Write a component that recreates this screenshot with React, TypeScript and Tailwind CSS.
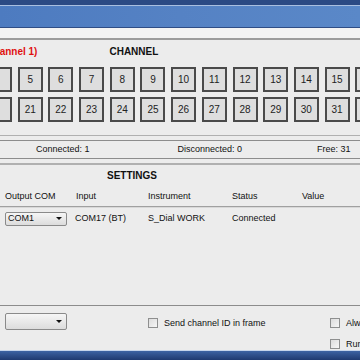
import React from "react";

const row1 = ["4", "5", "6", "7", "8", "9", "10", "11", "12", "13", "14", "15", "16"];
const row2 = ["20", "21", "22", "23", "24", "25", "26", "27", "28", "29", "30", "31", "32"];

function ChannelButton({ label }: { label: string }) {
  return (
    <div className="w-[25px] h-[25px] shrink-0 border-2 border-[#4a4a4a] bg-[#dedede] flex items-center justify-center text-[10px] text-[#222]">
      {label}
    </div>
  );
}

function Combo({ value, h }: { value: string; h: string }) {
  return (
    <div className={`w-[62px] ${h} border border-[#8a8a8a] rounded-[2px] bg-gradient-to-b from-[#f6f6f6] to-[#dcdcdc] flex items-center justify-between pl-[2px] pr-[4px] text-[9px] text-[#111]`}>
      <span>{value}</span>
      <span className="w-0 h-0 border-l-[3px] border-r-[3px] border-t-[3px] border-l-transparent border-r-transparent border-t-[#111]" />
    </div>
  );
}

function Check({ label }: { label: string }) {
  return (
    <div className="h-[10px] flex items-center gap-[6px] text-[9px] leading-none text-[#111] whitespace-nowrap">
      <div className="w-[10px] h-[10px] shrink-0 border border-[#8e8f8f] bg-gradient-to-br from-[#dcdcdc] to-[#f6f6f6]" />
      <span>{label}</span>
    </div>
  );
}

export default function App() {
  return (
    <div
      className="w-[360px] h-[360px] overflow-hidden bg-[#ececec] flex flex-col"
      style={{ fontFamily: '"Liberation Sans", Arial, sans-serif' }}
    >
      {/* title bar */}
      <div className="h-[5px] bg-[#2b4a84] shrink-0" />
      <div className="h-px bg-[#a9bfe0] shrink-0" />
      <div className="h-[21px] bg-gradient-to-r from-[#4d7bc0] via-[#5582c4] to-[#5a88c8] shrink-0" />
      <div className="h-px bg-[#2f4d85] shrink-0" />
      <div className="h-[10px] bg-[#f3f3f3] shrink-0" />
      <div className="h-[2px] bg-[#9c9c9c] shrink-0" />

      {/* channel title */}
      <div className="h-[23px] flex items-center shrink-0">
        <span className="ml-[-17px] shrink-0 text-[10px] font-bold text-[#e01010] whitespace-nowrap">(Channel 1)</span>
        <span className="ml-[72px] shrink-0 text-[10px] font-bold text-[#111]">CHANNEL</span>
      </div>

      {/* channel buttons */}
      <div className="mt-[4px] flex flex-col gap-[5px] shrink-0">
        <div className="flex gap-[5.7px] ml-[-13px]">
          {row1.map((l) => (
            <ChannelButton key={l} label={l === "4" || l === "16" ? "" : l} />
          ))}
        </div>
        <div className="flex gap-[5.7px] ml-[-13px]">
          {row2.map((l) => (
            <ChannelButton key={l} label={l === "20" || l === "32" ? "" : l} />
          ))}
        </div>
      </div>

      {/* status strip */}
      <div className="mt-[13px] h-px bg-[#b0b0b0] shrink-0" />
      <div className="mt-[4px] h-px bg-[#8c8c8c] shrink-0" />
      <div className="h-[17px] flex items-center text-[9px] text-[#111] shrink-0">
        <span className="ml-[36px] shrink-0">Connected: 1</span>
        <span className="ml-[88px] shrink-0">Disconnected: 0</span>
        <span className="ml-[75px] shrink-0">Free: 31</span>
      </div>
      <div className="h-px bg-[#8c8c8c] shrink-0" />
      <div className="mt-[4px] h-[2px] bg-[#b0b0b0] shrink-0" />

      {/* settings */}
      <div className="h-[20px] flex items-center shrink-0">
        <span className="ml-[107px] text-[10px] font-bold text-[#111]">SETTINGS</span>
      </div>

      {/* header */}
      <div className="mt-[3px] h-[18px] flex items-center text-[9px] text-[#111] shrink-0">
        <span className="ml-[5px] w-[71px] shrink-0">Output COM</span>
        <span className="w-[72px] shrink-0">Input</span>
        <span className="w-[84px] shrink-0">Instrument</span>
        <span className="w-[70px] shrink-0">Status</span>
        <span className="shrink-0">Value</span>
      </div>
      <div className="h-px bg-[#a0a0a0] shrink-0" />
      <div className="h-px bg-[#d8d8d8] shrink-0" />

      {/* data row */}
      <div className="mt-[3px] h-[15px] flex items-center text-[9px] text-[#111] shrink-0">
        <div className="ml-[5px] w-[70px] shrink-0">
          <Combo value="COM1" h="h-[14px]" />
        </div>
        <span className="w-[73px] shrink-0">COM17 (BT)</span>
        <span className="w-[84px] shrink-0">S_Dial WORK</span>
        <span className="shrink-0">Connected</span>
      </div>

      <div className="flex-1" />

      {/* bottom controls */}
      <div className="h-px bg-[#8c8c8c] shrink-0" />
      <div className="h-[44px] flex shrink-0">
        <div className="ml-[5px] mt-[7px] w-[143px] shrink-0">
          <Combo value="" h="h-[17px]" />
        </div>
        <div className="mt-[12px] w-[182px] shrink-0">
          <Check label="Send channel ID in frame" />
        </div>
        <div className="mt-[12px] flex flex-col gap-[11px] shrink-0">
          <Check label="Always on top" />
          <Check label="Run at startup" />
        </div>
      </div>
      <div className="h-px bg-[#c5d4ea] shrink-0" />
      <div className="h-[9px] bg-gradient-to-b from-[#3d63a3] to-[#1f3a70] shrink-0" />
    </div>
  );
}
